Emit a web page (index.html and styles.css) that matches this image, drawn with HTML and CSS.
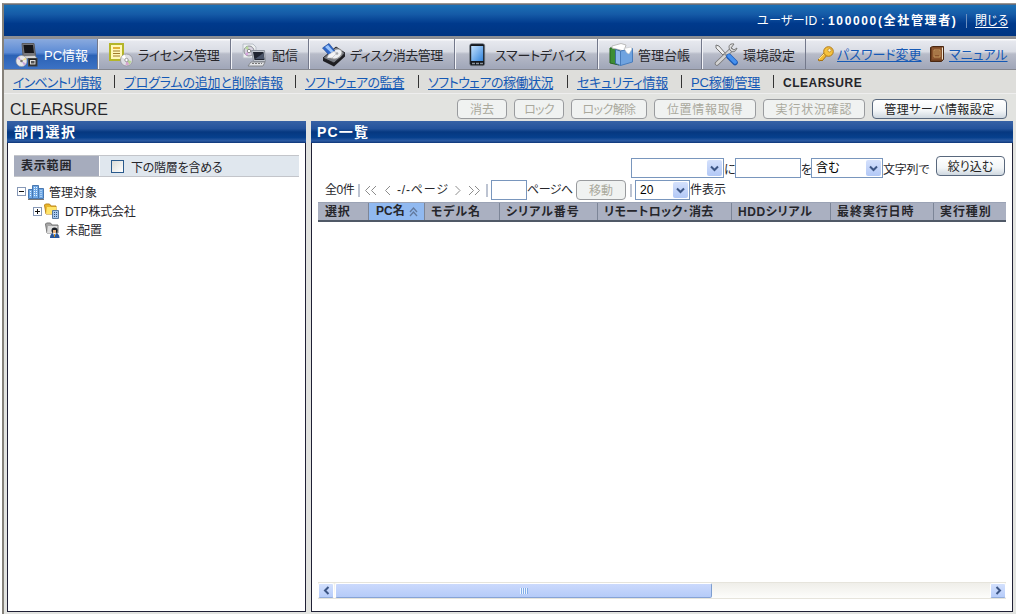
FILE: index.html
```html
<!DOCTYPE html>
<html lang="ja">
<head>
<meta charset="utf-8">
<title>CLEARSURE</title>
<link rel="stylesheet" href="styles.css">
</head>
<body>
<div class="window">
  <header class="banner">
    <span class="user-label">ユーザーID :</span>
    <b class="user-name">100000(全社管理者)</b>
    <i class="banner-rule"></i>
    <a class="close">閉じる</a>
  </header>

  <nav class="tabs">
    <a class="tab tab-pc active">
      <svg width="24" height="24" viewBox="0 0 24 24"><path d="M7 .5h12l1.500 12H8z" fill="#77777c" stroke="#5a5b60"/><path d="M8.500 2h9.500l1 8H9.500z" fill="#151519"/><path d="M5 13l15-.5 2 3H3z" fill="#d8d8d8" stroke="#777" stroke-width=".6"/><circle cx="6.500" cy="18" r="5.500" fill="#e8e8ea" stroke="#999" stroke-width=".6"/><path d="M6.500 18L2 15.500l2-2zM6.500 18l4.500 2.500-2 2z" fill="#c9a4dd"/><path d="M6.500 18l4-3.500 1 2z" fill="#f1df91"/><circle cx="6.500" cy="18" r="1.300" fill="#777"/><rect x="13.500" y="15.500" width="8.500" height="7.500" fill="#222" stroke="#444"/><rect x="15.500" y="17.500" width="4.500" height="3.500" fill="#555" stroke="#ddd"/></svg>
      <span class="t1">PC情報</span></a>
    <a class="tab tab-license">
      <svg width="24" height="24" viewBox="0 0 24 24"><rect x="1" y="1" width="13" height="16" fill="#fff8b8" stroke="#b4b529" stroke-width="2"/><path d="M4 8h7M4 10.500h7M4 13h7" stroke="#a17a2a"/><path d="M4 4h7v2H4z" fill="#e0b138"/><circle cx="17.500" cy="17" r="6" fill="#dedfe4" stroke="#929299" stroke-width=".8"/><path d="M17.500 17l-5-3 3-2.500z" fill="#fff"/><path d="M17.500 17l5 1-2 4z" fill="#b5d592"/><path d="M17.500 17l-1 5.500 4-1z" fill="#d7a5cf"/><circle cx="17.500" cy="17" r="1.700" fill="#fff" stroke="#777" stroke-width=".7"/></svg>
      <span class="t2">ライセンス管理</span></a>
    <a class="tab tab-send">
      <svg width="25" height="24" viewBox="0 0 25 24"><path d="M1 1h10l3 3v11H1z" fill="#edf0f1" stroke="#b8bec7"/><circle cx="7" cy="8" r="5" fill="#d8d2df" stroke="#8e9197"/><path d="M7 8L3 5l3-2z" fill="#b8dc9b"/><path d="M7 8l-2 5-2-2z" fill="#d6a0dc"/><circle cx="7" cy="8" r="1.700" fill="#fff" stroke="#777" stroke-width=".8"/><path d="M9.500 7.500h13l1 11h-12z" fill="#c2c7ce" stroke="#8e949e"/><path d="M11 9h10.500l1 8h-10z" fill="#202530"/><path d="M13 16l8.500-6 .8 6z" fill="#4a5468"/><path d="M9 19h14l-2 4H6z" fill="#e4e5e8" stroke="#84878c"/><path d="M10 20.500h10" stroke="#777" stroke-dasharray="2 1"/></svg>
      <span class="t3">配信</span></a>
    <a class="tab tab-disk">
      <svg width="25" height="24" viewBox="0 0 25 24"><path d="M2 15L15 4l9 6-11 10z" fill="#777b82" stroke="#28282c"/><path d="M2 15l11 5v3.500L2 18zM13 20l11-9.500v3l-11 10z" fill="#1e1e22"/><ellipse cx="15" cy="11" rx="6.500" ry="4.500" transform="rotate(-30 15 11)" fill="#eef0f2" stroke="#999"/><circle cx="16" cy="10.500" r="1.300" fill="#a5a8ad"/><path d="M1.500 5L8 .5l6 7.500-6 4z" fill="#2f67c9" stroke="#184390" stroke-width=".6"/><path d="M4 4l3-2 6 7-2 1.500z" fill="#9bc4fa"/><path d="M7.500 11.500l6-3.500 1.500 3-4 4H6z" fill="#f4f4f5" stroke="#aaa" stroke-width=".5"/></svg>
      <span class="t4">ディスク消去管理</span></a>
    <a class="tab tab-device">
      <svg width="17" height="24" viewBox="0 0 17 24"><defs><linearGradient id="screen" x2="1" y2="1"><stop stop-color="#c4e2ff"/><stop offset="1" stop-color="#3183db"/></linearGradient></defs><rect x=".7" y=".7" width="15" height="22" rx="2" fill="#15181d" stroke="#77808b" stroke-width=".7"/><rect x="2.200" y="3" width="12" height="15" fill="url(#screen)"/><path d="M3 20.500h3M7 20.500h3M11 20.500h3" stroke="#8a929b" stroke-width="1.500"/></svg>
      <span class="t5">スマートデバイス</span></a>
    <a class="tab tab-ledger">
      <svg width="25" height="24" viewBox="0 0 25 24"><path d="M1 5l9-1v18l-9-2z" fill="#3d8d35" stroke="#27631f"/><path d="M3 3l9-2.500 5 1.500-2 6-12-3z" fill="#fff" stroke="#bbb"/><path d="M6.500 6.500l5 1.500v14.500l-5-2z" fill="#8bb5ea" stroke="#315f9d" stroke-width=".8"/><path d="M11.500 8L23.500 5.500v13.500l-12 3.500z" fill="#6fa3e0" stroke="#477cbd"/><path d="M15 5.500l7-1.500 1 2-3 5-2-1z" fill="#fff" stroke="#bbb" stroke-width=".5"/></svg>
      <span class="t6">管理台帳</span></a>
    <a class="tab tab-config">
      <svg width="25" height="23" viewBox="0 0 25 23"><path d="M3 20.500L17 7" stroke="#777" stroke-width="4.500" stroke-linecap="round"/><path d="M3 20.500L17 7" stroke="#d4d4d4" stroke-width="2.800" stroke-linecap="round"/><path d="M20 1c-5-1-6 3-4 6 2 3 6 2 7-2l-3 2-3-2z" fill="#ddd" stroke="#777"/><path d="M2 2l3 1 6 7-2 2-7-7z" fill="#eee" stroke="#777"/><path d="M10 10l4 4" stroke="#999" stroke-width="2"/><path d="M15 13.500l6 6" stroke="#1c5ab5" stroke-width="5.500" stroke-linecap="round"/><path d="M15 13l6 6" stroke="#4590ee" stroke-width="3.800" stroke-linecap="round"/></svg>
      <span class="t7">環境設定</span></a>
    <div class="tools">
      <svg class="key" width="17" height="17" viewBox="0 0 17 17"><path d="M2 13l6-7 3 2-6 7-1-1-1 1-2-1z" fill="#f3ba32" stroke="#a77213"/><path d="M2 13l7-7" stroke="#ffe68e"/><circle cx="11.500" cy="5.500" r="4.800" fill="#f6c23e" stroke="#b07a19"/><circle cx="12.500" cy="4.300" r="1.700" fill="#fff3c9" stroke="#b07a19" stroke-width=".7"/></svg>
      <a class="link pass">パスワード変更</a>
      <svg class="book" width="14" height="16" viewBox="0 0 14 16"><path d="M.5 1.500l2-1h11v13l-2 2H.5z" fill="#70401f" stroke="#4a2711"/><path d="M2 1.500h10v12H2z" fill="#8c552f"/><path d="M12 2l1-1v12l-1 1z" fill="#eee4d1"/><path d="M4 4h6v7H4zM5 6h4M5 8h4" fill="none" stroke="#c39a61"/></svg>
      <a class="link manual">マニュアル</a>
    </div>
  </nav>

  <nav class="submenu">
    <a class="link m1">インベントリ情報</a><i></i>
    <a class="link m2">プログラムの追加と削除情報</a><i></i>
    <a class="link m3">ソフトウェアの監査</a><i></i>
    <a class="link m4">ソフトウェアの稼働状況</a><i></i>
    <a class="link m5">セキュリティ情報</a><i></i>
    <a class="link m6">PC稼働管理</a><i></i>
    <b>CLEARSURE</b>
  </nav>

  <div class="titlebar">
    <h1>CLEARSURE</h1>
    <button class="btn b1" disabled>消去</button>
    <button class="btn b2" disabled>ロック</button>
    <button class="btn b3" disabled>ロック解除</button>
    <button class="btn b4" disabled>位置情報取得</button>
    <button class="btn b5" disabled>実行状況確認</button>
    <button class="btn b6">管理サーバ情報設定</button>
  </div>

  <main class="panels">
    <section class="panel">
      <h2 class="h-dept">部門選択</h2>
      <div class="body side">
        <div class="scope"><b>表示範囲</b><label><span class="check"></span><span class="s-label">下の階層を含める</span></label></div>
        <div class="tree">
          <div class="node">
            <span class="toggle"></span>
            <svg width="16" height="16" viewBox="0 0 16 16"><path d="M.5 5.500h4v9h-4zM4.500 1.500h6v13h-6zM10.500 4.500h5v10h-5z" fill="#6fa8e5" stroke="#4a78b0"/><path d="M6.500 3v10M8.500 3v10M2.500 7v6M13 6v7" stroke="#eaf5ff" stroke-dasharray="1 1"/><path d="M0 15.500h16" stroke="#777"/></svg>
            <span class="n1">管理対象</span>
          </div>
          <div class="node child">
            <span class="toggle plus"></span>
            <svg width="16" height="16" viewBox="0 0 16 16"><path d="M.5 2l1-1h4l1.500 2h5v8H2z" fill="#e8b52a" stroke="#bc861a"/><path d="M3 4h9.500l-1 7H2z" fill="#ffe46b"/><path d="M8.500 7.500h6v8h-6z" fill="#a9c9ee" stroke="#58799f"/><path d="M10.500 9v5M12.500 9v5" stroke="#31527d" stroke-dasharray="1 1"/></svg>
            <span class="n2">DTP株式会社</span>
          </div>
          <div class="node child leaf">
            <svg width="16" height="16" viewBox="0 0 16 16"><path d="M.5 2l1-1h4l1.500 2h6v8H2z" fill="#a6a6a6" stroke="#777"/><path d="M3 4h9.500l-1 7H2z" fill="#ddd"/><circle cx="9.500" cy="8.500" r="3" fill="#1c2027"/><path d="M8 8h3v3H8z" fill="#e9b47f"/><path d="M5 16c0-4 2-5 4.500-5s5 1 5 5z" fill="#28569d"/><path d="M8 11h3l-1.500 4z" fill="#fff"/><path d="M9.500 12v3" stroke="#d19320"/></svg>
            <span class="n3">未配置</span>
          </div>
        </div>
      </div>
    </section>

    <section class="panel">
      <h2 class="h-list">PC一覧</h2>
      <div class="body list">
        <div class="filter">
          <span class="select f-field"><i class="drop"><svg width="9" height="7" viewBox="0 0 9 7"><path d="M1 1.500l3.500 3.500L8 1.500" fill="none" stroke="#3d5685" stroke-width="2"/></svg></i></span>
          <span class="ni">に</span><span class="input f-text"></span><span class="wo">を</span>
          <span class="select f-op">含む<i class="drop"><svg width="9" height="7" viewBox="0 0 9 7"><path d="M1 1.500l3.500 3.500L8 1.500" fill="none" stroke="#3d5685" stroke-width="2"/></svg></i></span>
          <span class="string">文字列で</span>
          <button class="btn f-go">絞り込む</button>
        </div>
        <div class="pager">
          <span class="total">全0件</span><i class="sep"></i>
          <svg class="arrows" width="30" height="11" viewBox="0 0 30 11"><path d="M5 1L.5 5.500 5 10M11 1L6.500 5.500 11 10M25 1l-4.500 4.500L25 10" fill="none" stroke="#8c8c8c"/></svg>
          <span class="page">-/-ページ</span>
          <svg class="arrows" width="30" height="11" viewBox="0 0 30 11"><path d="M.5 1L5 5.500.5 10M14 1l4.500 4.500L14 10M20 1l4.500 4.500L20 10" fill="none" stroke="#8c8c8c"/></svg>
          <i class="sep sep2"></i><span class="input p-input"></span><span class="topage">ページへ</span>
          <button class="btn p-go" disabled>移動</button><i class="sep sep3"></i>
          <span class="select p-size">20<i class="drop"><svg width="9" height="7" viewBox="0 0 9 7"><path d="M1 1.500l3.500 3.500L8 1.500" fill="none" stroke="#3d5685" stroke-width="2"/></svg></i></span>
          <span class="per">件表示</span>
        </div>
        <div class="thead">
          <b>選択</b><b class="sorted">PC名<svg width="9" height="10" viewBox="0 0 9 10"><path d="M1 5l3.500-4L8 5M1 9l3.500-4L8 9" fill="none" stroke="#62799d" stroke-width="1.300"/></svg></b><b class="c3">モデル名</b><b class="c4">シリアル番号</b><b class="c5">リモートロック･消去</b><b class="c6">HDDシリアル</b><b class="c7">最終実行日時</b><b class="c8">実行種別</b>
        </div>
        <div class="hscroll">
          <span class="sb"><svg width="7" height="9" viewBox="0 0 7 9"><path d="M5.500 1L2 4.500 5.500 8" fill="none" stroke="#3d5685" stroke-width="2"/></svg></span>
          <span class="thumb"><i></i></span>
          <span class="sb right"><svg width="7" height="9" viewBox="0 0 7 9"><path d="M1.500 1L5 4.500 1.500 8" fill="none" stroke="#3d5685" stroke-width="2"/></svg></span>
        </div>
      </div>
    </section>
  </main>
</div>
</body>
</html>
```
FILE: styles.css
```css
* { box-sizing: border-box; }
body {
  margin: 0;
  padding: 3px 0 0 2px;
  height: 614px;
  overflow: hidden;
  background: #fff;
  color: #26262b;
  font: 12px/16px "Liberation Sans", "Noto Sans CJK JP", sans-serif;
  font-feature-settings: "palt";
  white-space: nowrap;
}
.window {
  height: 611px;
  border-left: 2px solid #85817a;
  border-top: 1px solid #9a948e;
  background: #e2e3e0;
}
.link { color: #1559b5; text-decoration: underline; text-underline-offset: 2px; }

.banner {
  height: 32px;
  display: flex;
  align-items: center;
  color: #fff;
  padding-left: 753px;
  background: linear-gradient(#1b70b5 0, #155aa7 30%, #003a8c 60%, #003582 100%);
  border-top: 1px solid #5f6c80;
}
.user-label { width: 71px; letter-spacing: .3px; }
.user-name { width: 138px; letter-spacing: 1.65px; }
.banner-rule { width: 1px; height: 14px; background: #6d8fbf; }
.close { margin-left: 8px; text-decoration: underline; text-underline-offset: 2px; }

.tabs {
  height: 34px;
  display: grid;
  grid-template-columns: 94px 133px 78px 146px 143px 104px 104px 1fr;
  border-top: 3px solid #8d8f94;
  box-shadow: inset 0 1px #fff;
  border-bottom: 1px solid #85878f;
  background: linear-gradient(#fff 0, #e6e8ee 8%, #d9dce4 42%, #b7bbc8 50%, #a2a8ba 95%);
  font-size: 13px;
}
.tab { display: flex; align-items: center; border-right: 1px solid #73788b; border-left: 1px solid #f3f4f8; padding-top: 1px; }
.tab svg, .tools svg { flex: none; }
.tab span, .tools a { padding-top: 2px; }
.active { color: #fff; background: linear-gradient(#8aaade, #5c8bd5 45%, #2b62b6 55%, #3c72c4); border-left: 0; }
.tab-pc { padding-left: 11px; gap: 5px; }
.tab-license { padding-left: 10px; gap: 5px; }
.tab-send { padding-left: 10px; gap: 5px; }
.tab-disk { padding-left: 11px; gap: 4px; }
.tab-device { padding-left: 13px; gap: 9px; }
.tab-ledger { padding-left: 10px; gap: 4px; }
.tab-config { padding-left: 11px; gap: 4px; }
.t2 { letter-spacing: -.4px; }
.t4 { letter-spacing: -.5px; }
.t5 { letter-spacing: -.2px; }
.tools { display: flex; align-items: center; padding-left: 11px; }
.pass { width: 85px; margin-left: 3px; }
.book { margin: 0 5px 0 8px; }

.submenu { height: 24px; display: flex; align-items: center; padding-left: 9px; font-size: 13px; border-bottom: 1px solid #eee; background: #dededb; }
.submenu a { padding-top: 2px; }
.submenu i { width: 1px; height: 13px; background: #333; margin-right: 9px; }
.submenu b { font-size: 12px; letter-spacing: .5px; padding-top: 2px; }
.m1 { width: 101px; letter-spacing: -.8px; }
.m2 { width: 171px; letter-spacing: -.2px; }
.m3 { width: 113px; letter-spacing: -.6px; }
.m4 { width: 139px; letter-spacing: -.5px; }
.m5 { width: 104px; letter-spacing: -.3px; }
.m6 { width: 82px; letter-spacing: -.15px; }

.titlebar { height: 27px; display: flex; align-items: flex-start; padding: 5px 7px 0 6px; }
h1 { margin: 1px 0 0; width: 447px; font-weight: 400; font-size: 16px; line-height: 19px; }
.btn {
  height: 20px; padding: 1px 0 0; flex: none;
  font: inherit; font-size: 12px; line-height: 16px; color: #222;
  border: 1px solid #59687d; border-radius: 4px;
  background: linear-gradient(#fff, #f2f5f7 60%, #cfd8e0);
}
.btn:disabled { color: #aaa99d; border-color: #999b9e; background: #f0f2f1; }
.b1, .b2 { width: 50px; margin-right: 7px; }
.b2 { letter-spacing: -.8px; }
.b3 { width: 76px; margin-right: 7px; letter-spacing: -.6px; }
.b4 { width: 102px; margin-right: 7px; letter-spacing: .7px; }
.b5 { width: 102px; margin-right: 7px; letter-spacing: .8px; }
.b6 { width: 135px; letter-spacing: .45px; }

.panels { display: grid; grid-template-columns: 299px 702px; gap: 5px; padding-left: 3px; height: 491px; }
.panel { display: flex; flex-direction: column; }
h2 { margin: 0; height: 22px; padding-left: 6px; color: #fff; font-size: 14px; line-height: 22px; background: linear-gradient(#3762a5 0, #24539c 35%, #063880 50%, #07408d 75%, #2c5ba3 90%, #0c3577); }
.h-dept { padding-left: 7px; letter-spacing: 1.7px; }
.h-list { letter-spacing: 1.2px; }
.body { flex: 1; background: #fff; border: 1px solid #202035; border-top: 0; }

.side { padding: 12px 6px 0; }
.scope { height: 22px; display: flex; border: solid #c3c5ca; border-width: 1px 0; background: #e0e7ee; }
.scope b { width: 86px; padding: 2px 0 0 7px; background: #a6acbd; border-right: 1px solid #fff; letter-spacing: .8px; }
.scope label { display: flex; align-items: center; padding-left: 11px; }
.s-label { padding-top: 3px; letter-spacing: -.25px; }
.check { width: 13px; height: 13px; border: 1px solid #2a5a8c; background: linear-gradient(135deg, #dcdcd7, #fff); margin-right: 7px; }
.tree { padding: 4px 0 0 3px; }
.node { height: 20px; display: flex; align-items: center; padding-top: 1px; }
.node svg { margin: 0 5px 0 2px; }
.n1, .n2, .n3 { padding-top: 2px; }
.child { height: 19px; padding-left: 16px; }
.leaf { padding-left: 26px; }
.n2 { letter-spacing: -.2px; }
.toggle { width: 9px; height: 9px; border: 1px solid #8799b7; background: linear-gradient(#111, #111) center / 5px 1px no-repeat; }
.plus { background: linear-gradient(#111, #111) center / 5px 1px no-repeat, linear-gradient(#111, #111) center / 1px 5px no-repeat; }

.list { display: flex; flex-direction: column; padding: 13px 6px 12px 6px; }
.input, .select { flex: none; height: 20px; border: 1px solid #7996bd; background: #fff; }
.select { display: flex; align-items: center; justify-content: space-between; padding: 1px 1px 1px 4px; color: #000; }
.drop { width: 15px; height: 16px; margin-left: auto; display: flex; align-items: center; justify-content: center; border-radius: 2px; background: linear-gradient(#d5e1fc, #b2c8f6); }
.filter { height: 24px; display: flex; align-items: flex-start; padding-left: 313px; }
.filter > span { margin-top: 2px; }
.filter .ni, .filter .wo, .filter .string { margin-top: 6px; }
.string { letter-spacing: -.2px; }
.f-field { width: 93px; }
.ni { width: 11px; }
.f-text { width: 66px; }
.wo { width: 10px; }
.f-op { width: 72px; }
.string { width: 53px; }
.f-go { width: 69px; }
.pager { height: 22px; display: flex; align-items: center; padding-left: 7px; padding-bottom: 2px; }
.total { width: 33px; letter-spacing: -.4px; }
.sep { width: 2px; height: 13px; background: #bdc4d2; margin-right: 5px; }
.arrows { flex: none; }
.page { width: 60px; padding-left: 2px; letter-spacing: .8px; }
.sep2 { margin-right: 3px; margin-left: 1px; }
.p-input { width: 36px; }
.topage { width: 49px; letter-spacing: -.5px; }
.p-go { width: 50px; }
.sep3 { margin: 0 3px 0 4px; }
.p-size { width: 55px; }
.thead { flex: none; height: 20px; display: grid; grid-template-columns: 50px 56px 75px 98px 134px 99px 103px 1fr; background: #aab0c1; border-top: 1px solid #9ba3b5; border-bottom: 2px solid #505967; }
.thead b { padding-left: 6px; line-height: 19px; height: 17px; border-left: 1px solid #7c8597; }
.thead b:first-child { border-left: 0; padding-left: 7px; letter-spacing: .7px; }
.thead .sorted { display: flex; align-items: center; justify-content: space-between; padding: 0 6px 0 7px; background: #91b9f0; }
.thead .c3, .thead .c4 { letter-spacing: .9px; }
.thead .c6, .thead .c8, .thead .c7 { letter-spacing: .9px; }
.thead .c6 { letter-spacing: .6px; }
.thead .c5 { letter-spacing: .3px; }

.hscroll { margin-top: auto; height: 17px; display: flex; background: linear-gradient(#efeee9, #fdfdfb); border: solid #e6e4dc; border-width: 1px 0; }
.sb { width: 16px; height: 15px; display: flex; align-items: center; justify-content: center; background: linear-gradient(#d3e0fd, #b7cdfa); border: 1px solid #fff; border-bottom-color: #92addb; border-radius: 2px; }
.thumb { width: 377px; margin-left: 1px; height: 15px; display: flex; align-items: center; justify-content: center; background: linear-gradient(#cbd9fc, #b5cbf8); border: 1px solid #fff; border-right-color: #7e9ed0; border-bottom-color: #86a3d6; border-radius: 2px; }
.thumb i { width: 8px; height: 6px; background: repeating-linear-gradient(90deg, #eef5ff 0 1px, #82ade8 1px 2px); }
.right { margin-left: auto; }
```
